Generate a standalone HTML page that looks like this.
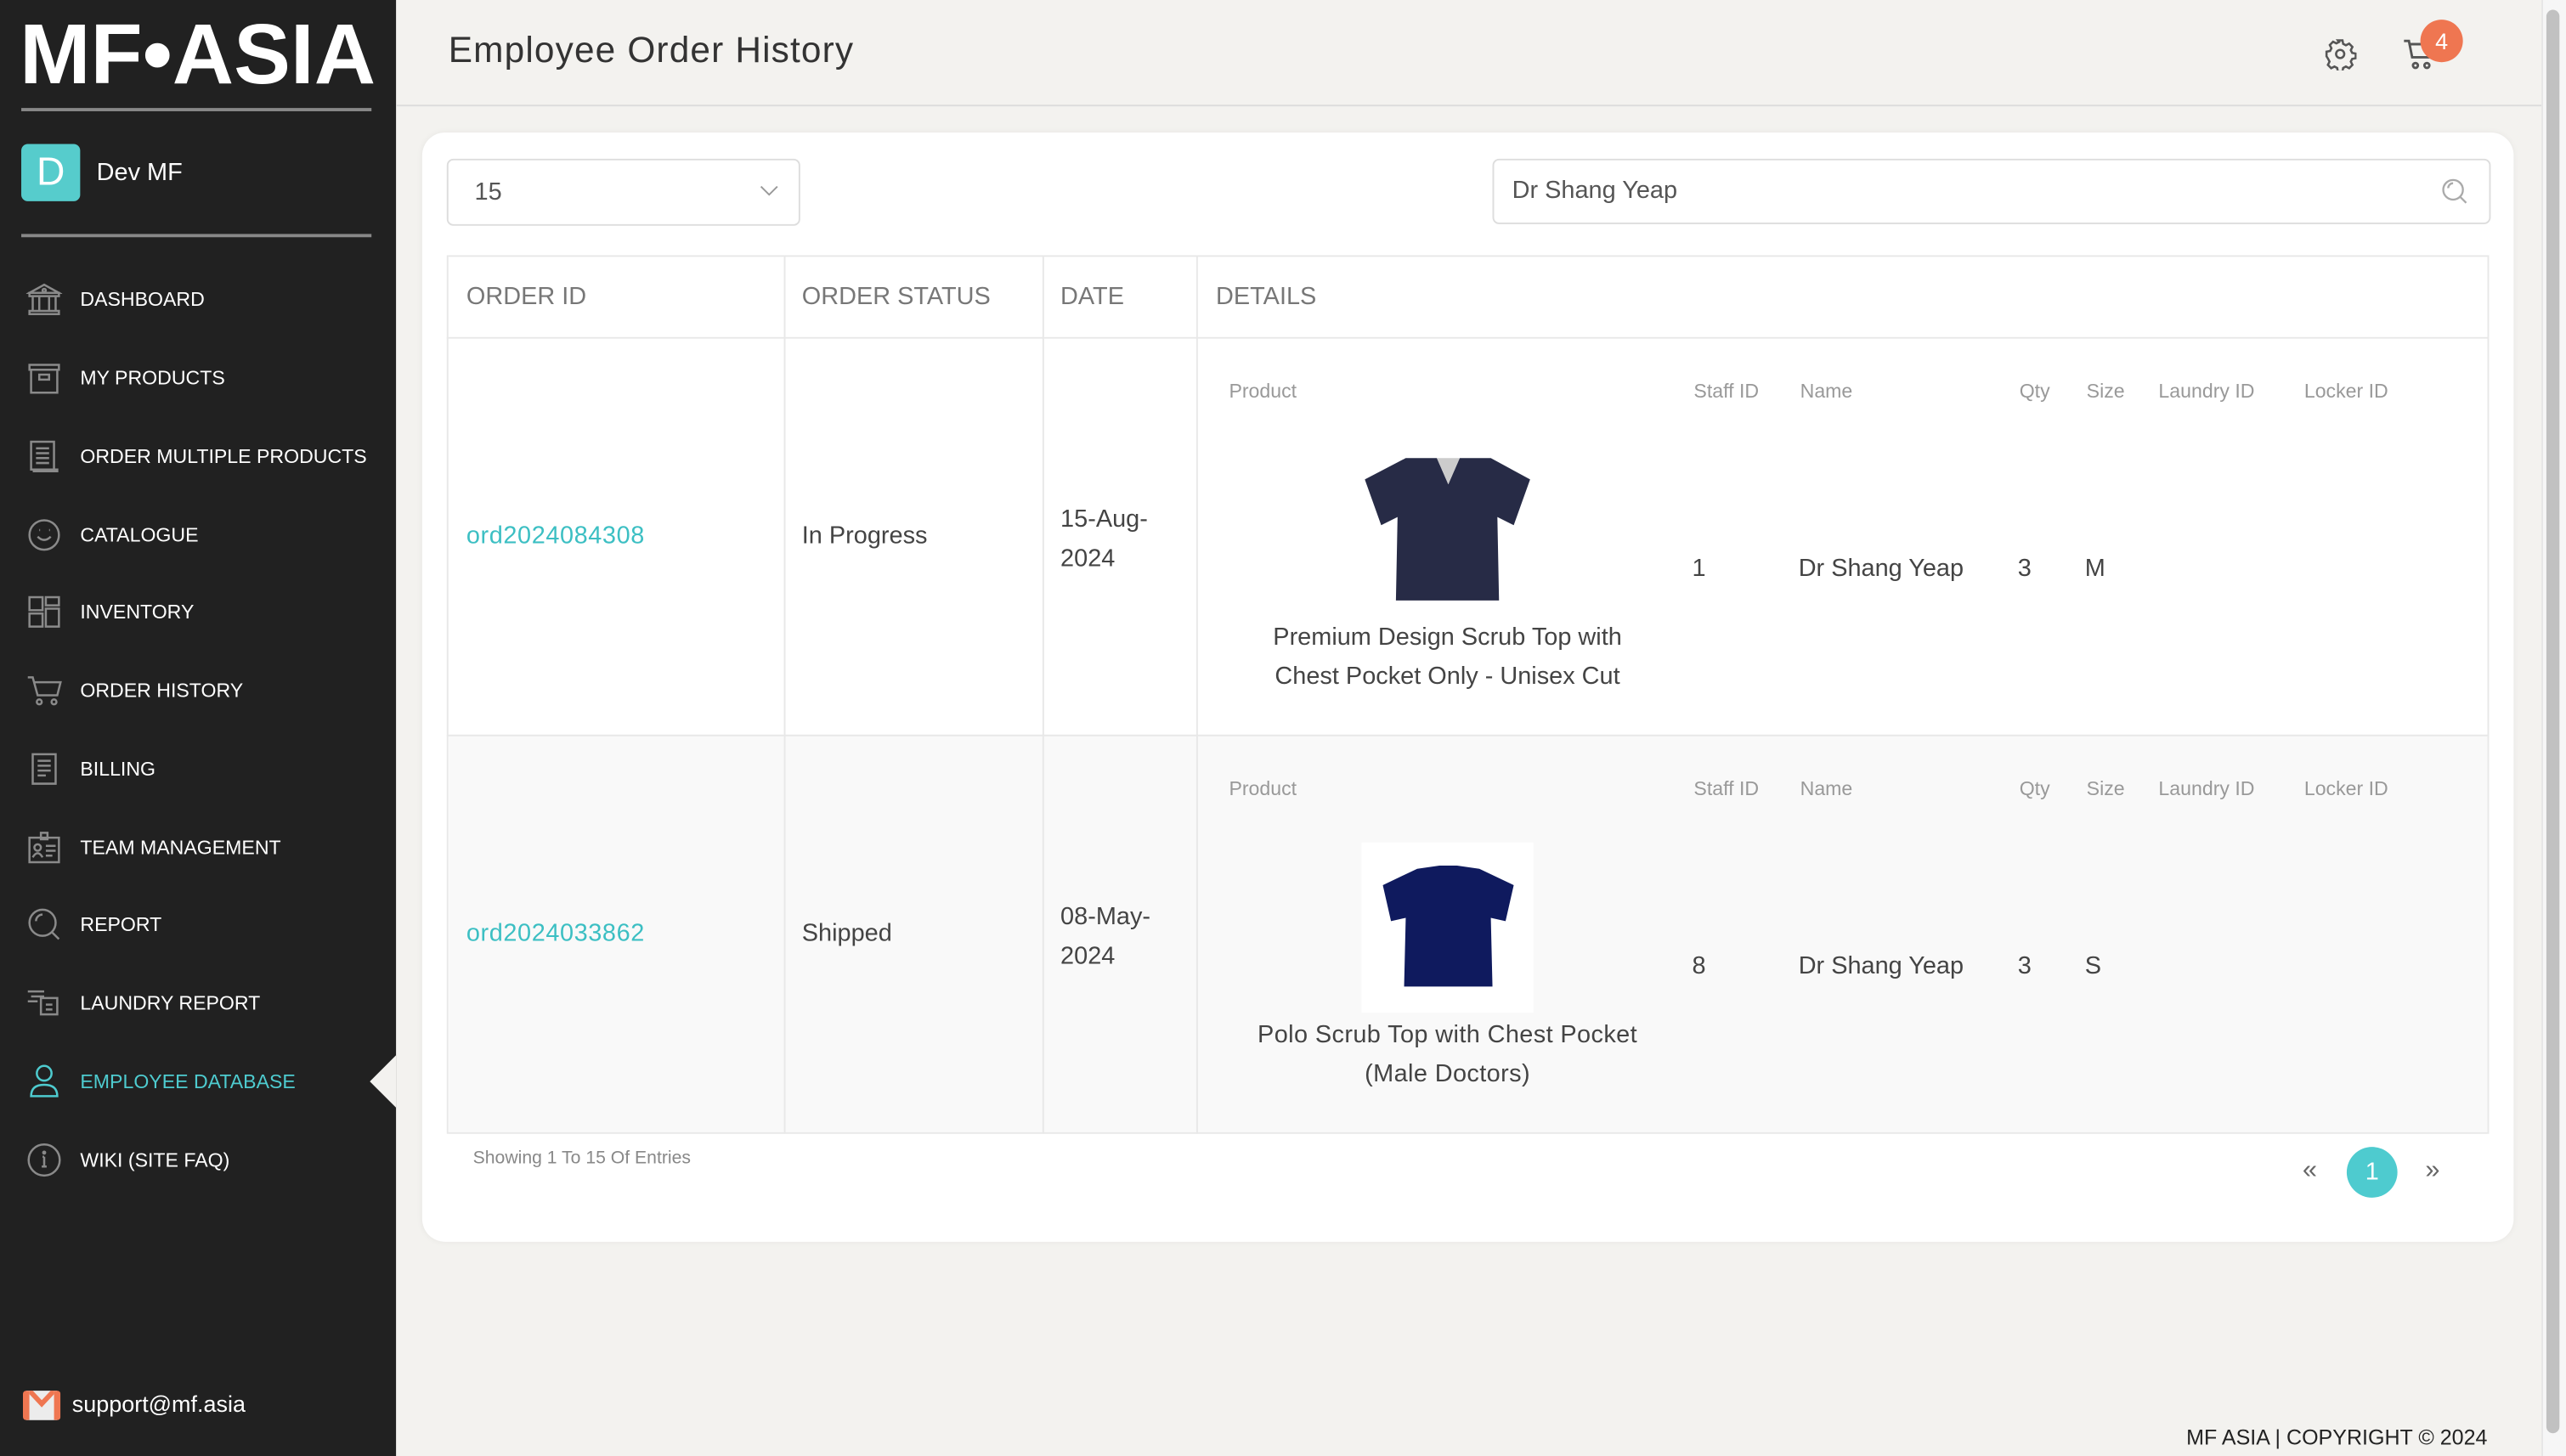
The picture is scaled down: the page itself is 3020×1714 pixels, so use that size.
<!DOCTYPE html>
<html><head><meta charset="utf-8"><style>
*{box-sizing:border-box;margin:0;padding:0}
html,body{width:3020px;height:1714px;overflow:hidden;background:#f3f2ef}
#w{width:1568px;height:890px;transform:scale(1.92602);transform-origin:0 0;position:relative;font-family:"Liberation Sans",sans-serif;color:#444}
.a{position:absolute}
#sb{left:0;top:0;width:242px;height:890px;background:#212121}
.logo{left:12px;top:6px;color:#fff;font-size:52px;font-weight:bold;letter-spacing:0;line-height:56px}
.hr{left:13px;width:214px;height:1.5px;background:#888}
.mi{left:16px;height:24px;display:flex;align-items:center;color:#fff;font-size:12px;white-space:nowrap}
.mi svg{width:22px;height:22px;margin-right:11px;fill:none;stroke:#8a8a8a;stroke-width:1.3}
.th{font-size:15px;color:#777}
.sub{font-size:12px;color:#999}
.cell{font-size:15px;color:#444}
</style></head><body><div id="w">
<div id="sb" class="a">
 <div class="a logo">MF•ASIA</div>
 <div class="a hr" style="top:66px"></div>
 <div class="a" style="left:13px;top:88px;width:36px;height:35px;background:#56cccc;border-radius:4px;color:#fff;font-size:24px;text-align:center;line-height:35px">D</div>
 <div class="a" style="left:59px;top:97px;color:#fff;font-size:15px">Dev MF</div>
 <div class="a hr" style="top:143px"></div>

 <div class="a mi" style="top:171px"><svg viewBox="0 0 22 22"><path d="M2 7L11 2L20 7ZM2 7h18v2H2zM4 9v9M8 9v9M14 9v9M18 9v9M2 18h18v2H2z"/><circle cx="11" cy="5.5" r="1"/></svg><span>DASHBOARD</span></div>
 <div class="a mi" style="top:219px"><svg viewBox="0 0 22 22"><path d="M2 3h18v3H2zM3 6v14h16V6M8 9h6v3H8z"/></svg><span>MY PRODUCTS</span></div>
 <div class="a mi" style="top:267px"><svg viewBox="0 0 22 22"><path d="M3 2h14v17H3zM3 19h16v1H4M6 6h8M6 9h8M6 12h8M6 15h8"/></svg><span>ORDER MULTIPLE PRODUCTS</span></div>
 <div class="a mi" style="top:315px"><svg viewBox="0 0 22 22"><circle cx="11" cy="11" r="9"/><path d="M7 12q4 4 8 0M8 8h.5M14 8h.5"/></svg><span>CATALOGUE</span></div>
 <div class="a mi" style="top:362px"><svg viewBox="0 0 22 22"><path d="M2 2h8v8H2zM12 2h8v5h-8zM2 12h8v8H2zM12 9h8v11h-8z"/></svg><span>INVENTORY</span></div>
 <div class="a mi" style="top:410px"><svg viewBox="0 0 22 22"><path d="M1 3h3l3 11h12l2-8H5"/><circle cx="8" cy="18" r="1.5"/><circle cx="17" cy="18" r="1.5"/></svg><span>ORDER HISTORY</span></div>
 <div class="a mi" style="top:458px"><svg viewBox="0 0 22 22"><path d="M4 2h14v18H4zM7 6h8M7 9h8M7 12h8M7 15h5"/></svg><span>BILLING</span></div>
 <div class="a mi" style="top:506px"><svg viewBox="0 0 22 22"><path d="M2 5h18v15H2zM9 2h4v4H9z"/><circle cx="7" cy="11" r="2"/><path d="M4 17q3-5 6 0M12 10h6M12 13h6M12 16h4"/></svg><span>TEAM MANAGEMENT</span></div>
 <div class="a mi" style="top:553px"><svg viewBox="0 0 22 22"><circle cx="10" cy="10" r="8"/><path d="M16 16l4 4M6 9a4 4 0 0 1 4-4"/></svg><span>REPORT</span></div>
 <div class="a mi" style="top:601px"><svg viewBox="0 0 22 22"><path d="M1 4h10M3 7h8M1 10h6M9 8h10v10H9zM12 12h4M12 15h4"/></svg><span>LAUNDRY REPORT</span></div>
 <div class="a mi" style="top:649px;color:#4ecbcf"><svg viewBox="0 0 22 22" style="stroke:#4ecbcf"><circle cx="11" cy="6" r="4.5"/><path d="M3 20q0-7 8-7q8 0 8 7z"/></svg><span>EMPLOYEE DATABASE</span></div>
 <div class="a mi" style="top:697px"><svg viewBox="0 0 22 22"><circle cx="11" cy="11" r="9.5"/><path d="M11 9v6M9.5 15h3M10 9h1"/><circle cx="11" cy="6.5" r=".6"/></svg><span>WIKI (SITE FAQ)</span></div>
 <div class="a" style="left:226px;top:645px;width:0;height:0;border-top:16px solid transparent;border-bottom:16px solid transparent;border-right:16px solid #f3f2ef"></div>

 <div class="a" style="left:14px;top:850px;width:23px;height:18px;background:#ececec;border-radius:2px;border-left:4px solid #ef7651;border-right:4px solid #ef7651"><svg width="15" height="18" viewBox="0 0 15 18" style="display:block"><path d="M0 0l7.5 8L15 0" fill="none" stroke="#ef7651" stroke-width="3"/></svg></div>
 <div class="a" style="left:44px;top:850px;color:#fff;font-size:14px">support@mf.asia</div>
</div>

<div class="a" style="left:242px;top:64px;width:1311px;height:1px;background:#dcdcdc"></div>
<div class="a" style="left:274px;top:18px;font-size:22px;letter-spacing:.6px;color:#333">Employee Order History</div>
<svg class="a" style="left:1420px;top:23px" width="20" height="20" viewBox="0 0 24 24" fill="none" stroke="#555" stroke-width="1.6"><circle cx="12" cy="12" r="3"/><path d="M10.3 2h3.4l.5 2.6 2 1 2.4-1.2 2.4 2.4-1.2 2.4 1 2 2.6.5v3.4l-2.6.5-1 2 1.2 2.4-2.4 2.4-2.4-1.2-2 1-.5 2.6h-3.4l-.5-2.6-2-1-2.4 1.2-2.4-2.4 1.2-2.4-1-2L2 13.7v-3.4l2.6-.5 1-2-1.2-2.4 2.4-2.4 2.4 1.2 2-1z"/></svg>
<svg class="a" style="left:1468px;top:23px" width="22" height="20" viewBox="0 0 22 20" fill="none" stroke="#555" stroke-width="1.5"><path d="M1 2h3l2 10h10l1-8H5"/><circle cx="8" cy="17" r="1.5"/><circle cx="15" cy="17" r="1.5"/></svg>
<div class="a" style="left:1479px;top:12px;width:26px;height:26px;border-radius:50%;background:#ef7651;color:#fff;font-size:14px;text-align:center;line-height:26px">4</div>
<div class="a" style="left:1553px;top:0;width:15px;height:890px;background:#f6f6f6;border-left:1px solid #e6e6e6"></div>
<div class="a" style="left:1556px;top:6px;width:8px;height:870px;background:#c1c1c1;border-radius:4px"></div>

<div class="a" style="left:258px;top:81px;width:1278px;height:678px;background:#fff;border-radius:14px;box-shadow:0 0 4px rgba(0,0,0,.05)"></div>
<div class="a" style="left:273px;top:97px;width:216px;height:41px;border:1px solid #ddd;border-radius:4px"><span class="a" style="left:16px;top:11px;font-size:15px;color:#555">15</span><svg class="a" style="left:190px;top:15px" width="12" height="8" viewBox="0 0 12 8" fill="none" stroke="#999"><path d="M1 1l5 5 5-5"/></svg></div>
<div class="a" style="left:912px;top:97px;width:610px;height:40px;border:1px solid #ddd;border-radius:4px"><span class="a" style="left:11px;top:10px;font-size:15px;color:#555">Dr Shang Yeap</span><svg class="a" style="left:578px;top:10px" width="18" height="18" viewBox="0 0 18 18" fill="none" stroke="#aaa" stroke-width="1.2"><circle cx="8" cy="8" r="6"/><path d="M12.5 12.5l3.5 3.5M5 7a3 3 0 0 1 3-3"/></svg></div>

<div class="a" style="left:273px;top:156px;width:1248px;height:537px;border:1px solid #e8e8e8"></div>
<div class="a" style="left:274px;top:449px;width:1246px;height:243px;background:#f9f9f9"></div>
<div class="a" style="left:273px;top:206px;width:1248px;height:1px;background:#e8e8e8"></div>
<div class="a" style="left:273px;top:449px;width:1248px;height:1px;background:#e8e8e8"></div>
<div class="a" style="left:479px;top:156px;width:1px;height:537px;background:#e8e8e8"></div>
<div class="a" style="left:637px;top:156px;width:1px;height:537px;background:#e8e8e8"></div>
<div class="a" style="left:731px;top:156px;width:1px;height:537px;background:#e8e8e8"></div>
<div class="a th" style="left:285px;top:173px">ORDER ID</div>
<div class="a th" style="left:490px;top:173px">ORDER STATUS</div>
<div class="a th" style="left:648px;top:173px">DATE</div>
<div class="a th" style="left:743px;top:173px">DETAILS</div>

<div class="a cell" style="left:285px;top:319px;color:#3cbfc3;letter-spacing:.3px">ord2024084308</div>
<div class="a cell" style="left:490px;top:319px">In Progress</div>
<div class="a cell" style="left:648px;top:306px;line-height:24px">15-Aug-<br>2024</div>
<div class="a sub" style="left:751px;top:232px">Product</div>
<div class="a sub" style="left:1035px;top:232px">Staff ID</div>
<div class="a sub" style="left:1100px;top:232px">Name</div>
<div class="a sub" style="left:1234px;top:232px">Qty</div>
<div class="a sub" style="left:1275px;top:232px">Size</div>
<div class="a sub" style="left:1319px;top:232px">Laundry ID</div>
<div class="a sub" style="left:1408px;top:232px">Locker ID</div>
<svg class="a" style="left:834px;top:278px" width="102" height="92" viewBox="0 0 102 92"><path d="M25 2L44 2L51 18L58 2L77 2L101 15L91 43L81 38L82 89L19 89L20 38L10 43L0 15Z" fill="#272b46"/><path d="M44 2L51 18L58 2Z" fill="#ccc"/></svg>
<div class="a cell" style="left:762px;top:378px;width:245px;text-align:center;line-height:24px">Premium Design Scrub Top with Chest Pocket Only - Unisex Cut</div>
<div class="a cell" style="left:1034px;top:339px">1</div>
<div class="a cell" style="left:1099px;top:339px">Dr Shang Yeap</div>
<div class="a cell" style="left:1233px;top:339px">3</div>
<div class="a cell" style="left:1274px;top:339px">M</div>

<div class="a cell" style="left:285px;top:562px;color:#3cbfc3;letter-spacing:.3px">ord2024033862</div>
<div class="a cell" style="left:490px;top:562px">Shipped</div>
<div class="a cell" style="left:648px;top:549px;line-height:24px">08-May-<br>2024</div>
<div class="a sub" style="left:751px;top:475px">Product</div>
<div class="a sub" style="left:1035px;top:475px">Staff ID</div>
<div class="a sub" style="left:1100px;top:475px">Name</div>
<div class="a sub" style="left:1234px;top:475px">Qty</div>
<div class="a sub" style="left:1275px;top:475px">Size</div>
<div class="a sub" style="left:1319px;top:475px">Laundry ID</div>
<div class="a sub" style="left:1408px;top:475px">Locker ID</div>
<div class="a" style="left:832px;top:515px;width:105px;height:104px;background:#fff"></div>
<svg class="a" style="left:844px;top:529px" width="82" height="76" viewBox="0 0 82 76"><path d="M22 2L36 0L46 0L60 2L81 12L76 34L67 32L68 74L14 74L15 32L6 34L1 12Z" fill="#0f1a5e"/></svg>
<div class="a cell" style="left:751px;top:621px;width:267px;text-align:center;line-height:24px;letter-spacing:.2px">Polo Scrub Top with Chest Pocket (Male Doctors)</div>
<div class="a cell" style="left:1034px;top:582px">8</div>
<div class="a cell" style="left:1099px;top:582px">Dr Shang Yeap</div>
<div class="a cell" style="left:1233px;top:582px">3</div>
<div class="a cell" style="left:1274px;top:582px">S</div>

<div class="a" style="left:289px;top:702px;font-size:11px;color:#888">Showing 1 To 15 Of Entries</div>
<div class="a" style="left:1407px;top:707px;font-size:16px;color:#666">«</div>
<div class="a" style="left:1434px;top:701px;width:31px;height:31px;border-radius:50%;background:#4ecbcf;color:#fff;font-size:15px;text-align:center;line-height:31px">1</div>
<div class="a" style="left:1482px;top:707px;font-size:16px;color:#666">»</div>
<div class="a" style="left:1336px;top:871px;font-size:13px;color:#222">MF ASIA | COPYRIGHT © 2024</div>
</div></body></html>
